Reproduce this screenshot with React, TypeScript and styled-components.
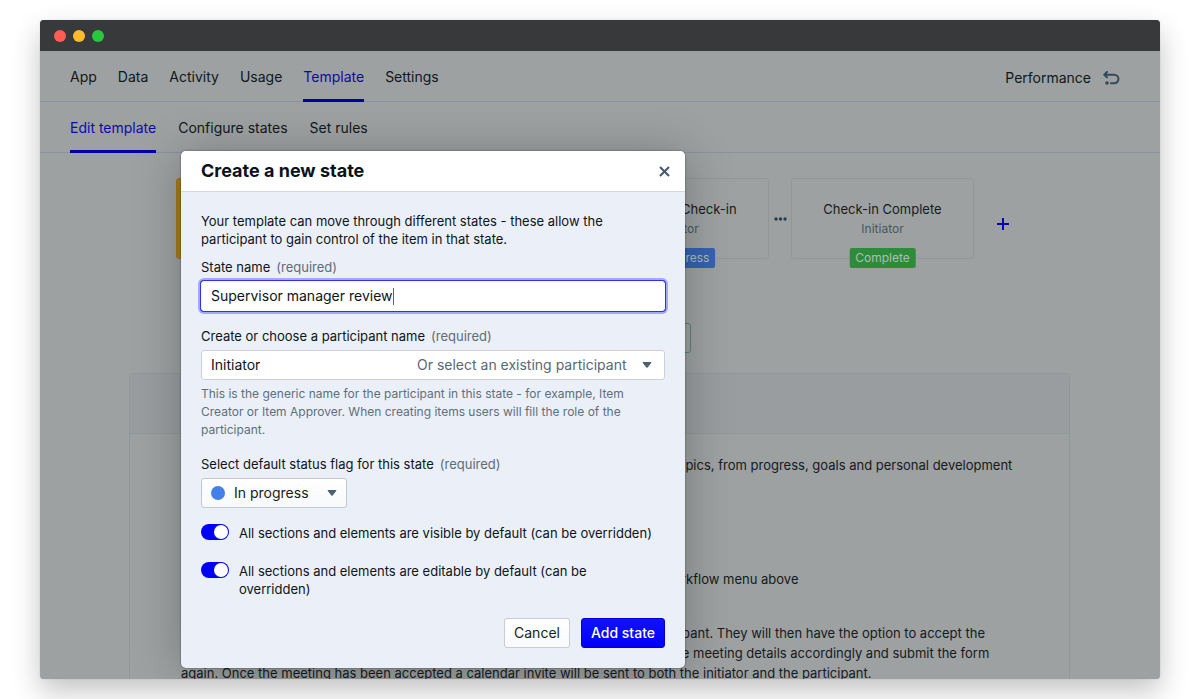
import React, { useState } from "react";
import styled, { createGlobalStyle } from "styled-components";

const GlobalStyle = createGlobalStyle`
  *, *::before, *::after { box-sizing: border-box; }
  body { margin: 0; background: #fff; font-family: Inter, "Liberation Sans", sans-serif; font-size: 13px; line-height: 18px; color: #0d1419; }
  button, input, select { font: inherit; color: inherit; margin: 0; }
  h1, h2, p { margin: 0; }
`;

const Page = styled.div`
  display: flex;
  height: 100vh;
  padding: 20px 40px;
`;

const BrowserWindow = styled.div`
  position: relative;
  flex: 1;
  min-width: 0;
  display: flex;
  flex-direction: column;
  overflow: hidden;
  border-radius: 4px;
  background: #9da1a1;
  box-shadow: 0 0 1px rgba(0, 0, 0, 0.3), 0 12px 28px rgba(0, 0, 0, 0.24);
`;

const TitleBar = styled.div`
  flex: none;
  display: flex;
  align-items: center;
  gap: 7px;
  height: 31px;
  padding: 1px 14px 0;
  background: #38393a;
`;

const TrafficLight = styled.span<{ $color: string }>`
  width: 12px;
  height: 12px;
  border-radius: 50%;
  background: ${(p) => p.$color};
`;

const Nav = styled.nav<{ $gap: number }>`
  flex: none;
  display: flex;
  gap: ${(p) => p.$gap}px;
  height: 51px;
  padding: 0 40px 0 30px;
  border-bottom: 1px solid #8c92a0;
  font-size: 14px;
`;

const NavLink = styled.a<{ $active?: boolean }>`
  display: flex;
  align-items: center;
  height: 51px;
  padding-top: 4px;
  border-bottom: 3px solid ${(p) => (p.$active ? "#0000a6" : "transparent")};
  color: ${(p) => (p.$active ? "#0e0aa8" : "#10171b")};
  text-decoration: none;
`;

const AppName = styled.div`
  display: flex;
  align-items: center;
  gap: 12px;
  height: 51px;
  padding-top: 2px;
  margin-left: auto;
  color: #10171b;
`;

const Workflow = styled.div`
  flex: none;
  display: flex;
  justify-content: center;
  margin-top: 25px;
  padding-right: 11px;
`;

const StateCard = styled.div<{ $highlight?: boolean }>`
  position: relative;
  flex: none;
  width: 183px;
  height: 81px;
  padding: 21px 10px 0;
  border: 1px solid ${(p) => (p.$highlight ? "#a0771c" : "#92979a")};
  border-radius: 3px;
  background: ${(p) => (p.$highlight ? "#a67c1e" : "transparent")};
  text-align: center;
`;

const StateTitle = styled.div`
  color: #151b1f;
  line-height: 18px;
`;

const StateOwner = styled.div`
  margin-top: 2px;
  font-size: 12px;
  color: #4a5860;
`;

const Badge = styled.span<{ $color: string }>`
  position: absolute;
  left: 50%;
  bottom: -10px;
  transform: translateX(-50%);
  padding: 1px 6px;
  border-radius: 2px;
  background: ${(p) => p.$color};
  color: #adbcb9;
  font-size: 12px;
  white-space: nowrap;
`;

const Connector = styled.div`
  display: flex;
  justify-content: center;
  align-items: center;
  width: 22px;
`;

const IconButton = styled.button<{ $color: string }>`
  display: grid;
  place-items: center;
  padding: 4px;
  border: 0;
  background: none;
  color: ${(p) => p.$color};
`;

const AddButton = styled(IconButton)`
  align-self: center;
  margin: 11px 0 0 19px;
`;

const PreviewButton = styled.button`
  flex: none;
  align-self: center;
  width: 182px;
  height: 30px;
  margin-top: 64px;
  border: 1px solid #5c8378;
  border-radius: 3px;
  background: transparent;
`;

const Section = styled.section`
  flex: none;
  margin: 20px 90px 0 89px;
  border: 1px solid #92979a;
  border-radius: 4px;
`;

const SectionHeader = styled.header`
  height: 60px;
  border-bottom: 1px solid #92979a;
  background: #999da0;
`;

const SectionBody = styled.div`
  display: flex;
  flex-direction: column;
  gap: 34px;
  padding: 21px 51px;
  line-height: 20px;
  color: #151a1d;
  white-space: nowrap;
`;

const Block = styled.div`
  display: flex;
  flex-direction: column;
  gap: 94px;
`;

const Backdrop = styled.div`
  position: absolute;
  inset: 31px 0 0;
  padding: 100px 0 0 141px;
`;

const Dialog = styled.form`
  width: 504px;
  border-radius: 5px;
  overflow: hidden;
  background: #ebeff7;
  box-shadow: 0 0 2px rgba(0, 0, 0, 0.5), 0 4px 48px rgba(0, 0, 0, 0.26);
`;

const DialogHeader = styled.header`
  display: flex;
  align-items: center;
  justify-content: space-between;
  height: 41px;
  padding: 0 11px 0 20px;
  border-bottom: 1px solid #d5d9df;
  background: #fff;
`;

const DialogTitle = styled.h2`
  font-size: 18px;
  font-weight: 700;
  line-height: 24px;
  color: #0b1218;
`;

const DialogBody = styled.div`
  display: flex;
  flex-direction: column;
  padding: 20px;
`;

const Field = styled.div<{ $gap: number }>`
  display: flex;
  flex-direction: column;
  align-items: stretch;
  gap: 5px;
  margin-top: ${(p) => p.$gap}px;
`;

const Required = styled.span`
  margin-left: 6px;
  color: #5b6d7a;
`;

const Help = styled.p`
  font-size: 12px;
  color: #5d707d;
`;

const Control = styled.div<{ $focus?: boolean }>`
  position: relative;
  display: flex;
  align-items: center;
  height: 30px;
  border: 1px solid ${(p) => (p.$focus ? "#fff" : "#cdd1d6")};
  border-radius: 3px;
  background: #fff;
  font-size: 14px;
  box-shadow: ${(p) => (p.$focus ? "0 0 0 1px #2f2ff5, 0 0 0 3px #a5a8fb" : "none")};
`;

const TextInput = styled.input`
  field-sizing: content;
  min-width: 10px;
  margin-left: 9px;
  padding: 0;
  border: 0;
  outline: 0;
  background: transparent;
  line-height: 20px;
`;

const Caret = styled.span`
  width: 1px;
  height: 17px;
  background: #5c6166;
`;

const Select = styled.select<{ $muted?: boolean }>`
  appearance: none;
  height: 28px;
  margin-left: auto;
  padding: 0 37px 0 0;
  border: 0;
  outline: 0;
  background: transparent;
  color: ${(p) => (p.$muted ? "#566975" : "#161d23")};
`;

const StatusControl = styled(Control)`
  align-self: flex-start;
  width: 146px;
  border-color: #c3c8cd;
  background: linear-gradient(#fff, #f7f9fb);
`;

const StatusDot = styled.span`
  position: absolute;
  left: 9px;
  width: 14px;
  height: 14px;
  border-radius: 50%;
  background: #4480e8;
`;

const Arrow = styled.svg<{ $right: number }>`
  position: absolute;
  right: ${(p) => p.$right}px;
  pointer-events: none;
`;

const ToggleRow = styled.label<{ $gap: number }>`
  display: flex;
  align-items: flex-start;
  gap: 10px;
  margin-top: ${(p) => p.$gap}px;
  padding-right: 10px;
`;

const Toggle = styled.input`
  appearance: none;
  flex: none;
  width: 28px;
  height: 16px;
  margin: 0;
  padding: 1px;
  border-radius: 8px;
  background: #a9b2bb;
  &::before {
    content: "";
    display: block;
    width: 14px;
    height: 14px;
    border-radius: 50%;
    background: #fff;
  }
  &:checked { background: #0000f5; }
  &:checked::before { margin-left: 12px; }
`;

const Actions = styled.div`
  display: flex;
  justify-content: flex-end;
  gap: 11px;
  margin-top: 20px;
`;

const Button = styled.button<{ $primary?: boolean }>`
  height: 30px;
  padding: 0 9px;
  border: 1px solid ${(p) => (p.$primary ? "#0000d0" : "#c9cdd2")};
  border-radius: 3px;
  background: ${(p) => (p.$primary ? "linear-gradient(#1212ff, #0000f8)" : "linear-gradient(#fff, #f9fafc)")};
  color: ${(p) => (p.$primary ? "#fff" : "#161d23")};
  font-size: 14px;
  font-weight: ${(p) => (p.$primary ? 500 : 400)};
`;

const Dots = () => (
  <svg width="13" height="4" viewBox="0 0 13 4" fill="#2c3e4c" aria-hidden="true">
    <circle cx="2" cy="2" r="1.7" />
    <circle cx="6.5" cy="2" r="1.7" />
    <circle cx="11" cy="2" r="1.7" />
  </svg>
);

const DownArrow = ({ right }: { right: number }) => (
  <Arrow $right={right} width="10" height="6" viewBox="0 0 10 6" aria-hidden="true">
    <path d="M1 .5h8L5.4 5.2a.5.5 0 0 1-.8 0z" fill="#4b6072" stroke="#4b6072" strokeLinejoin="round" />
  </Arrow>
);

const tabs = ["App", "Data", "Activity", "Usage", "Template", "Settings"];
const subTabs = ["Edit template", "Configure states", "Set rules"];

export default function App() {
  const [stateName, setStateName] = useState("Supervisor manager review");
  const [participant, setParticipant] = useState("Initiator");

  return (
    <Page>
      <GlobalStyle />
      <BrowserWindow>
        <TitleBar>
          <TrafficLight $color="#ff5c54" />
          <TrafficLight $color="#ffbb2d" />
          <TrafficLight $color="#27c83f" />
        </TitleBar>
        <Nav $gap={21}>
          {tabs.map((t) => (
            <NavLink key={t} href="#" $active={t === "Template"}>{t}</NavLink>
          ))}
          <AppName>
            Performance
            <svg width="17" height="14" viewBox="0 0 17 14" fill="none" stroke="#334a5c" strokeWidth="2" strokeLinecap="round" strokeLinejoin="round" aria-hidden="true">
              <path d="M4 1 1.3 3.7 4 6.4M1.6 3.7h9.6a4.2 4.2 0 0 1 0 8.5H8" />
              <circle cx="4" cy="12" r="1.8" fill="#334a5c" stroke="none" />
            </svg>
          </AppName>
        </Nav>
        <Nav $gap={22}>
          {subTabs.map((t) => (
            <NavLink key={t} href="#" $active={t === "Edit template"}>{t}</NavLink>
          ))}
        </Nav>

        <Workflow>
          <StateCard $highlight />
          <Connector><Dots /></Connector>
          <StateCard />
          <Connector><Dots /></Connector>
          <StateCard>
            <StateTitle>Complete Check-in</StateTitle>
            <StateOwner>Initiator</StateOwner>
            <Badge $color="#3563b0">In progress</Badge>
          </StateCard>
          <Connector><Dots /></Connector>
          <StateCard>
            <StateTitle>Check-in Complete</StateTitle>
            <StateOwner>Initiator</StateOwner>
            <Badge $color="#2d8c39">Complete</Badge>
          </StateCard>
          <AddButton type="button" aria-label="Add a state" $color="#0606a6">
            <svg width="12" height="12" viewBox="0 0 12 12" stroke="currentColor" strokeWidth="2" aria-hidden="true">
              <path d="M6 0v12M0 6h12" />
            </svg>
          </AddButton>
        </Workflow>

        <PreviewButton type="button" aria-label="Preview" />

        <Section>
          <SectionHeader />
          <SectionBody>
            <Block>
              <p>Use this template to hold a regular check-in. It covers a broad range of different topics, from progress, goals and personal development</p>
              <p>You can always see each of the states that this check-in moves through in the workflow menu above</p>
            </Block>
            <p>
              The initiator will arrange the meeting and send the suggested details to the participant. They will then have the option to accept the<br />
              meeting, or suggest another suitable time. The initiator should then also amend the meeting details accordingly and submit the form<br />
              again. Once the meeting has been accepted a calendar invite will be sent to both the initiator and the participant.
            </p>
          </SectionBody>
        </Section>

        <Backdrop>
          <Dialog role="dialog" aria-labelledby="dialog-title" onSubmit={(e: React.FormEvent) => e.preventDefault()}>
            <DialogHeader>
              <DialogTitle id="dialog-title">Create a new state</DialogTitle>
              <IconButton type="button" aria-label="Close" $color="#435869">
                <svg width="11" height="11" viewBox="0 0 11 11" stroke="currentColor" strokeWidth="2" aria-hidden="true">
                  <path d="m1 1 9 9M10 1l-9 9" />
                </svg>
              </IconButton>
            </DialogHeader>
            <DialogBody>
              <p>
                Your template can move through different states - these allow the participant to gain control of the item in that state.
              </p>
              <Field $gap={10}>
                <label htmlFor="state-name">State name<Required>(required)</Required></label>
                <Control $focus>
                  <TextInput id="state-name" value={stateName} onChange={(e) => setStateName(e.target.value)} />
                  <Caret />
                </Control>
              </Field>
              <Field $gap={16}>
                <label htmlFor="participant">Create or choose a participant name<Required>(required)</Required></label>
                <Control>
                  <TextInput id="participant" value={participant} onChange={(e) => setParticipant(e.target.value)} />
                  <Select aria-label="Existing participant" $muted>
                    <option>Or select an existing participant</option>
                  </Select>
                  <DownArrow right={12} />
                </Control>
                <Help>
                  This is the generic name for the participant in this state - for example, Item Creator or Item Approver. When creating items users will fill the role of the participant.
                </Help>
              </Field>
              <Field $gap={16}>
                <label htmlFor="status-flag">Select default status flag for this state<Required>(required)</Required></label>
                <StatusControl>
                  <StatusDot />
                  <Select id="status-flag">
                    <option>In progress</option>
                  </Select>
                  <DownArrow right={9} />
                </StatusControl>
              </Field>
              <ToggleRow $gap={16}>
                <Toggle type="checkbox" role="switch" defaultChecked />
                <span>All sections and elements are visible by default (can be overridden)</span>
              </ToggleRow>
              <ToggleRow $gap={20}>
                <Toggle type="checkbox" role="switch" defaultChecked />
                <span>All sections and elements are editable by default (can be overridden)</span>
              </ToggleRow>
              <Actions>
                <Button type="button">Cancel</Button>
                <Button type="submit" $primary>Add state</Button>
              </Actions>
            </DialogBody>
          </Dialog>
        </Backdrop>
      </BrowserWindow>
    </Page>
  );
}
